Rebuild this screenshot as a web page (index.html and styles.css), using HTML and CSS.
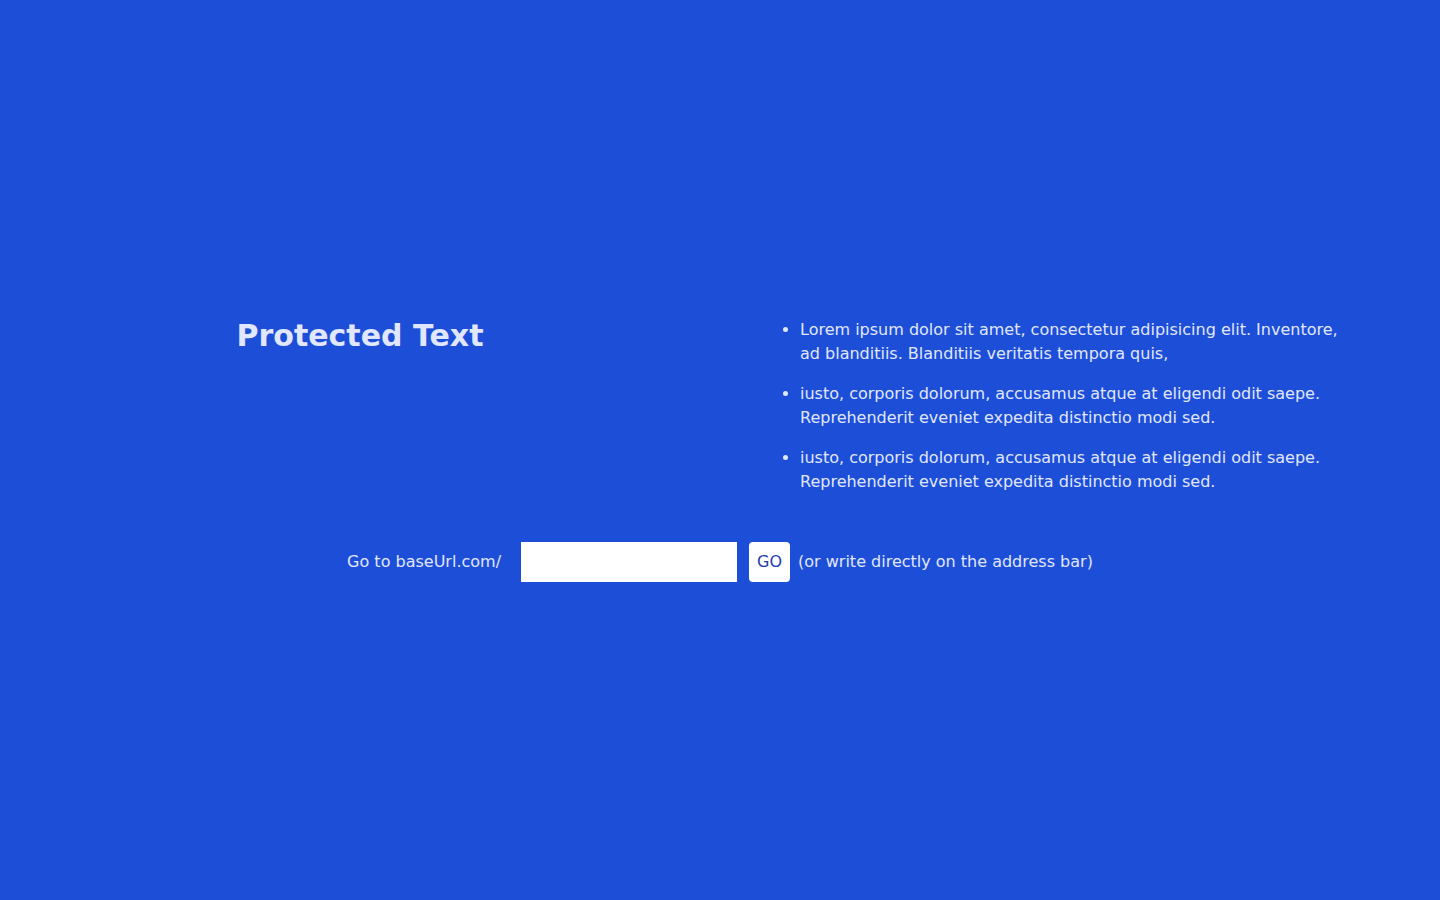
FILE: index.html
```html
<!DOCTYPE html>
<html lang="en">
<head>
<meta charset="utf-8">
<title>Protected Text</title>
<link rel="stylesheet" href="styles.css">
</head>
<body>
<main class="page">
  <section class="top">
    <div class="left">
      <h1 class="title">Protected Text</h1>
    </div>
    <div class="right">
      <ul class="points">
        <li>Lorem ipsum dolor sit amet, consectetur adipisicing elit. Inventore, ad blanditiis. Blanditiis veritatis tempora quis,</li>
        <li>iusto, corporis dolorum, accusamus atque at eligendi odit saepe. Reprehenderit eveniet expedita distinctio modi sed.</li>
        <li>iusto, corporis dolorum, accusamus atque at eligendi odit saepe. Reprehenderit eveniet expedita distinctio modi sed.</li>
      </ul>
    </div>
  </section>
  <form class="go-row">
    <label class="go-label" for="site">Go to baseUrl.com/</label>
    <input class="go-input" id="site" type="text">
    <button class="go-btn" type="button">GO</button>
    <span class="go-note">(or write directly on the address bar)</span>
  </form>
</main>
</body>
</html>
```

FILE: styles.css
```css
* { box-sizing: border-box; }
html, body { margin: 0; padding: 0; }
body {
  background: #1d4ed8;
  color: #e0e7ff;
  font-family: "DejaVu Sans", sans-serif;
  font-size: 16px;
  line-height: 24px;
}
.page {
  min-height: 100vh;
  display: flex;
  flex-direction: column;
  justify-content: center;
}
.top {
  display: grid;
  grid-template-columns: 1fr 1fr;
}
.left {
  display: flex;
  justify-content: center;
}
.title {
  margin: 0;
  font-size: 30px;
  line-height: 36px;
  font-weight: bold;
  color: #e0e7ff;
}
.right {
  padding-right: 80px;
}
.points {
  margin: 0;
  padding-left: 80px;
  list-style: disc;
}
.points li + li { margin-top: 16px; }
.go-row {
  margin: 48px 0 0;
  display: flex;
  justify-content: center;
  align-items: center;
}
.go-label { margin-right: 20px; }
.go-input {
  width: 216px;
  height: 40px;
  border: none;
  background: #fff;
  margin: 0 12px 0 0;
  padding: 0 8px;
  font: inherit;
}
.go-btn {
  width: 41px;
  height: 40px;
  border: none;
  border-radius: 4px;
  background: #fff;
  color: #1e40af;
  font: inherit;
  padding: 0;
  margin-right: 8px;
}
```
